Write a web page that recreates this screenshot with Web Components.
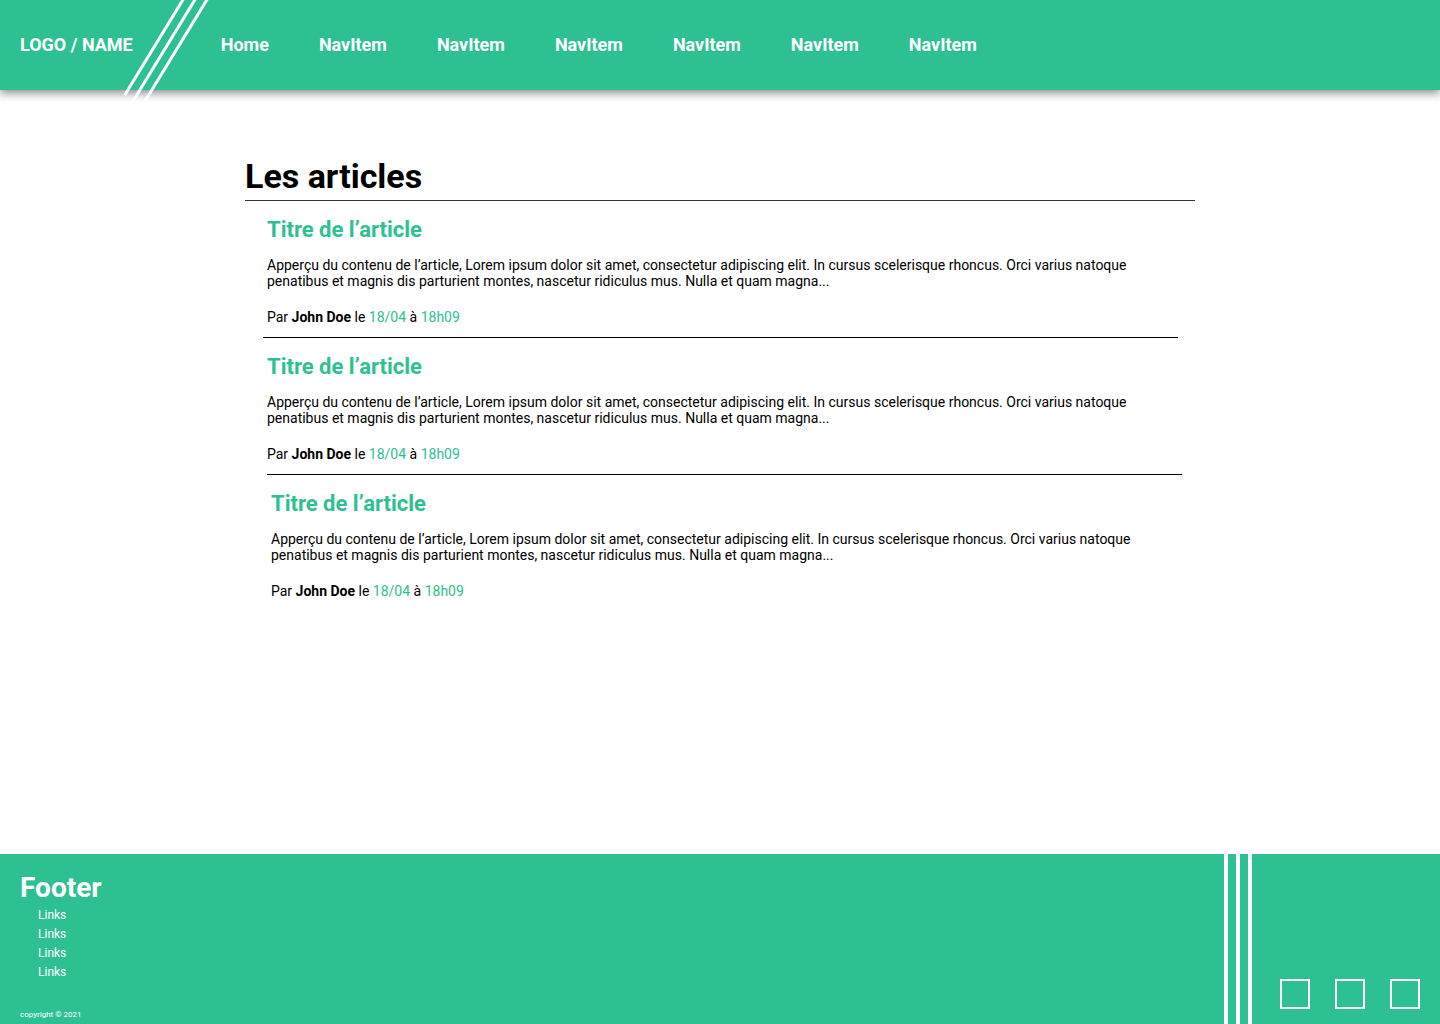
<!DOCTYPE html>
<html lang="fr">
<head>
<meta charset="utf-8">
<meta name="viewport" content="width=device-width, initial-scale=1">
<title>Les articles</title>
<style>
  :root { --brand: #2dc192; --ink: #000; }
  body {
    margin: 0;
    min-height: 100vh;
    display: flex;
    flex-direction: column;
    background: #fff;
    color: var(--ink);
    font: 14px/16px Roboto, "Liberation Sans", sans-serif;
  }
  article-list { flex: 1; }
</style>
</head>
<body>
<site-header>
  <span slot="brand">LOGO / NAME</span>
  <nav-item>Home</nav-item>
  <nav-item>NavItem</nav-item>
  <nav-item>NavItem</nav-item>
  <nav-item>NavItem</nav-item>
  <nav-item>NavItem</nav-item>
  <nav-item>NavItem</nav-item>
  <nav-item>NavItem</nav-item>
</site-header>

<article-list>
  <span slot="heading">Les articles</span>
  <article-card author="John Doe" date="18/04" time="18h09">
    <span slot="title">Titre de l’article</span>
    Apperçu du contenu de l’article, Lorem ipsum dolor sit amet, consectetur adipiscing elit. In cursus scelerisque rhoncus. Orci varius natoque penatibus et magnis dis parturient montes, nascetur ridiculus mus. Nulla et quam magna...
  </article-card>
  <article-card divided author="John Doe" date="18/04" time="18h09">
    <span slot="title">Titre de l’article</span>
    Apperçu du contenu de l’article, Lorem ipsum dolor sit amet, consectetur adipiscing elit. In cursus scelerisque rhoncus. Orci varius natoque penatibus et magnis dis parturient montes, nascetur ridiculus mus. Nulla et quam magna...
  </article-card>
  <article-card divided shifted author="John Doe" date="18/04" time="18h09">
    <span slot="title">Titre de l’article</span>
    Apperçu du contenu de l’article, Lorem ipsum dolor sit amet, consectetur adipiscing elit. In cursus scelerisque rhoncus. Orci varius natoque penatibus et magnis dis parturient montes, nascetur ridiculus mus. Nulla et quam magna...
  </article-card>
</article-list>

<site-footer>
  <span slot="heading">Footer</span>
  <footer-link>Links</footer-link>
  <footer-link>Links</footer-link>
  <footer-link>Links</footer-link>
  <footer-link>Links</footer-link>
  <span slot="copyright">copyright © 2021</span>
  <social-link slot="social" label="Réseau 1"></social-link>
  <social-link slot="social" label="Réseau 2"></social-link>
  <social-link slot="social" label="Réseau 3"></social-link>
</site-footer>

<script>
class BaseElement extends HTMLElement {
  connectedCallback() {
    if (this.shadowRoot) return;
    this.attachShadow({ mode: "open" }).innerHTML = this.render();
  }
}

customElements.define("site-header", class extends BaseElement {
  render() {
    return `
      <style>
        :host { display: block; position: relative; z-index: 1; }
        header {
          display: flex; align-items: center; gap: 88px;
          height: 90px; padding: 0 20px;
          background: var(--brand); color: #fff;
          box-shadow: 0 4px 8px rgba(0, 0, 0, .4);
          font-size: 18px; line-height: 22px; font-weight: 700;
        }
        .brand { position: relative; white-space: nowrap; }
        a { color: inherit; text-decoration: none; }
        nav { display: flex; flex-wrap: wrap; gap: 0 50px; }
        svg { position: absolute; left: 120px; top: 0; pointer-events: none; }
      </style>
      <header>
        <a class="brand" href="#"><slot name="brand"></slot></a>
        <nav><slot></slot></nav>
        <svg width="100" height="104" viewBox="0 0 100 104" fill="none" stroke="#fff" stroke-width="3" aria-hidden="true">
          <path d="M64 -2L4.500 95.500M76 -2L12.500 102M88 -2L24.500 102"/>
        </svg>
      </header>`;
  }
});

customElements.define("nav-item", class extends BaseElement {
  render() {
    return `
      <style>
        :host { display: block; }
        a { color: inherit; text-decoration: none; }
      </style>
      <a href="#"><slot></slot></a>`;
  }
});

customElements.define("article-list", class extends BaseElement {
  render() {
    return `
      <style>
        :host { display: block; padding: 64px 20px 40px; }
        main { max-width: 950px; margin: 0 auto; }
        h1 {
          margin: 0; padding-bottom: 2px; border-bottom: 1px solid #333;
          font-size: 34px; line-height: 44px; font-weight: 700;
        }
        section { padding: 0 17px 0 18px; }
      </style>
      <main>
        <h1><slot name="heading"></slot></h1>
        <section><slot></slot></section>
      </main>`;
  }
});

customElements.define("article-card", class extends BaseElement {
  render() {
    const attr = name => this.getAttribute(name);
    return `
      <style>
        :host { display: block; padding: 16px 4px 12px; }
        :host([divided]) { border-top: 1px solid var(--ink); }
        :host([shifted]) { margin: 0 -4px 0 4px; }
        h2 { margin: 0 0 14px; color: var(--brand); font-size: 22px; line-height: 26px; font-weight: 700; }
        p { margin: 0; }
        .meta { margin-top: 20px; }
        time { color: var(--brand); }
      </style>
      <article>
        <h2><slot name="title"></slot></h2>
        <p><slot></slot></p>
        <p class="meta">Par <strong>${attr("author")}</strong> le <time>${attr("date")}</time> à <time>${attr("time")}</time></p>
      </article>`;
  }
});

customElements.define("site-footer", class extends BaseElement {
  render() {
    return `
      <style>
        :host { display: block; }
        footer { display: flex; background: var(--brand); color: #fff; min-height: 170px; }
        .info { flex: 1; display: flex; flex-direction: column; padding: 18px 20px 3px; }
        h2 { margin: 0; font-size: 28px; line-height: 32px; font-weight: 700; }
        nav { padding: 2px 18px 0; }
        small { margin-top: auto; font-size: 8px; line-height: 12px; }
        .stripes { display: flex; gap: 8px; }
        .stripes i { width: 4px; background: #fff; }
        .social { display: flex; align-items: flex-end; gap: 25px; padding: 0 20px 15px 28px; }
      </style>
      <footer>
        <div class="info">
          <h2><slot name="heading"></slot></h2>
          <nav><slot></slot></nav>
          <small><slot name="copyright"></slot></small>
        </div>
        <div class="stripes" aria-hidden="true"><i></i><i></i><i></i></div>
        <div class="social"><slot name="social"></slot></div>
      </footer>`;
  }
});

customElements.define("footer-link", class extends BaseElement {
  render() {
    return `
      <style>
        :host { display: block; font-size: 12px; line-height: 19px; }
        a { color: inherit; text-decoration: none; }
      </style>
      <a href="#"><slot></slot></a>`;
  }
});

customElements.define("social-link", class extends BaseElement {
  render() {
    return `
      <style>
        :host { display: block; }
        a { display: block; box-sizing: border-box; width: 30px; height: 30px; border: 2px solid #fff; }
      </style>
      <a href="#" aria-label="${this.getAttribute("label")}"></a>`;
  }
});
</script>
</body>
</html>
